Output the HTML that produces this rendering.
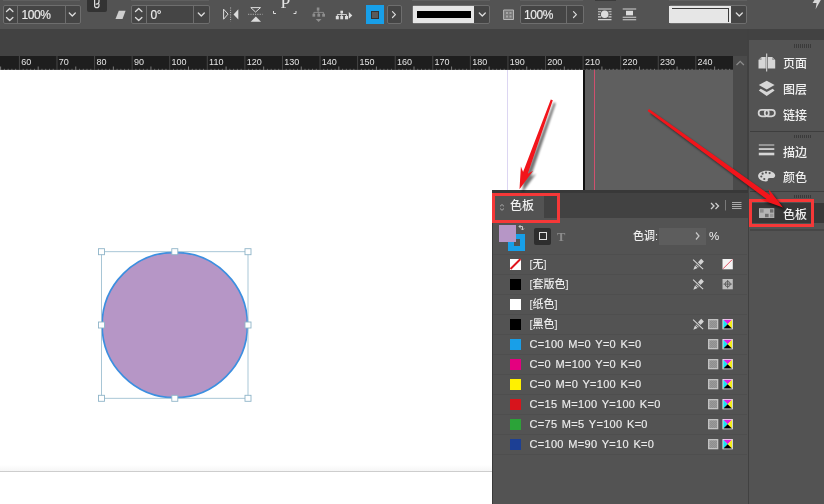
<!DOCTYPE html>
<html lang="zh-CN"><head><meta charset="utf-8"><title>InDesign 色板</title>
<style>
html,body{margin:0;padding:0;background:#535353;}
body{width:824px;height:504px;overflow:hidden;position:relative;font-family:"Liberation Sans","Noto Sans CJK SC",sans-serif;color:#e6e6e6;}
.abs,.abs *{position:absolute;box-sizing:border-box;}
.abs{position:absolute}
#root{left:0;top:0;width:824px;height:504px;overflow:hidden;will-change:transform}
.t{white-space:nowrap;line-height:1}
.inp{border:1px solid #6e6e6e;border-radius:2px;background:#454545}
.inp .dv{top:0;bottom:0;width:1px;background:#6e6e6e}
.lbl{font-size:12px;color:#ececec;letter-spacing:-0.45px;-webkit-text-stroke:0.15px #ececec}
.rl{font-size:9px;color:#e4e4e4;top:58px}
.dk{font-size:12px;color:#f0f0f0;left:783px;font-weight:500}
.sw{left:510px;width:11px;height:11px}
.sn{left:529.5px;font-size:11px;color:#ececec;font-weight:500}
.en{letter-spacing:0.3px;word-spacing:1.2px;-webkit-text-stroke:0.15px #ececec}
.sep{left:493px;width:254px;height:1px;background:#4e4e4e}
svg{position:absolute;overflow:visible}
</style></head><body>
<div id="root" class="abs">

<div style="left:0;top:0;width:824px;height:29px;background:#535353"></div>
<div style="left:0;top:29px;width:824px;height:27px;background:#424242"></div>
<div style="left:3px;top:0;width:77px;height:1px;background:#5f5f5f"></div>
<div style="left:131px;top:0;width:78px;height:1px;background:#5f5f5f"></div>
<div style="left:412px;top:0;width:78px;height:1px;background:#5f5f5f"></div>
<div style="left:520px;top:0;width:63px;height:1px;background:#5f5f5f"></div>
<div style="left:669px;top:0;width:78px;height:1px;background:#5f5f5f"></div>
<div style="left:595px;top:0;width:21px;height:1px;background:#3c3c3c"></div>
<div class="inp" style="left:2.5px;top:5px;width:78.0px;height:19px;"><div class="dv" style="left:13.5px"></div><div class="dv" style="left:61.0px"></div></div>
<div class="t lbl" style="left:21.500px;top:9px">100%</div>
<div class="inp" style="left:131.0px;top:5px;width:79.0px;height:19px;"><div class="dv" style="left:14.3px"></div><div class="dv" style="left:61.3px"></div></div>
<div class="t lbl" style="left:150.500px;top:9px">0°</div>
<div style="left:87px;top:0;width:19.5px;height:11.5px;background:#333;border-radius:0 0 2px 2px"></div>
<div class="inp" style="left:412px;top:5px;width:78px;height:19px;"></div>
<div style="left:412.500px;top:6px;width:61.500px;height:17px;background:#e6e6e6"></div><div style="left:416.500px;top:11px;width:54.500px;height:7px;background:#000"></div>
<div class="inp" style="left:520.0px;top:5px;width:63.5px;height:19px;"><div class="dv" style="left:45.3px"></div></div>
<div class="t lbl" style="left:524px;top:9px">100%</div>
<div class="inp" style="left:669px;top:5px;width:78px;height:19px;"></div>
<div style="left:669px;top:6px;width:62px;height:17px;background:#e6e6e6"></div><div style="left:671.500px;top:7.500px;width:57px;height:14px;border-top:1.500px solid #3a3a3a;border-right:1.500px solid #3a3a3a"></div>
<div style="left:365.500px;top:5px;width:18px;height:19px;background:#189fe8"></div>
<div style="left:370.500px;top:10.500px;width:8px;height:8px;border:1.500px solid #333;background:#5a5a5a"></div>
<div class="inp" style="left:387px;top:5px;width:15px;height:19px;"></div>
<svg style="left:0;top:0" width="824" height="56" viewBox="0 0 824 56" fill="none" stroke="#dcdcdc" stroke-width="1.3" stroke-linecap="round" stroke-linejoin="round">
<path d="M6.5 11.5l3.2-3 3.2 3M6.5 17.5l3.2 3 3.2-3"/>
<path d="M69.300 13l3 3 3-3"/>
<path d="M135.500 11.5l3.2-3 3.2 3M135.5 17.5l3.2 3 3.2-3"/>
<path d="M198.300 13l3 3 3-3"/>
<path d="M479.300 13l3 3 3-3"/>
<path d="M736.300 13l3 3 3-3"/>
<path d="M392.500 11.700l2.900 2.900-2.900 2.900" stroke-width="1.200"/>
<path d="M573.500 11.700l2.900 2.900-2.900 2.900" stroke-width="1.200"/>
<path d="M94.600 -1V5.400a2.200 2.200 0 0 0 4.400 0V4.200M99 -1V1.400c0 1.600-1.200 2.500-2.800 2.700" stroke-width="1.200"/>
<path d="M118.800 10.800h6.800l-3.100 8.300h-7z" fill="#cfcfcf" stroke="none"/>
<path d="M223.600 9.600v9.600l4.200-4.800z" stroke-width="1"/>
<path d="M238.300 9.300v10.200l-4.800-5.100z" fill="#dcdcdc" stroke="none"/>
<path d="M230.600 7.500v14" stroke-dasharray="1 1.300" stroke-width="1" stroke-linecap="butt" stroke="#bdbdbd"/>
<path d="M251.200 7.600h9.300l-4.650 4.200z" stroke-width="1"/>
<path d="M250.700 21.700h10.300l-5.150-5.200z" fill="#dcdcdc" stroke="none"/>
<path d="M248.200 14.300h14.300" stroke-dasharray="1 1.300" stroke-width="1" stroke-linecap="butt" stroke="#bdbdbd"/>
<path d="M273.500 11v2.500h2.500M296 11v2.500h-2.500" stroke-width="1" stroke-linecap="butt" stroke-linejoin="miter"/>
<g fill="#8e8e8e" stroke="#8e8e8e" stroke-width="0.900" stroke-linecap="butt" stroke-linejoin="miter">
<rect x="316.800" y="7.500" width="2.600" height="3.200" stroke="none"/><path d="M318.100 10.700v1.700M313.850 14v-1.600h9.700v1.600M318.750 12.400v1.600" fill="none"/>
<rect x="312.500" y="13.800" width="2.700" height="2.900" stroke="none"/><rect x="317.400" y="13.800" width="2.700" height="2.900" stroke="none"/><rect x="322.200" y="13.800" width="2.800" height="2.900" stroke="none"/>
<path d="M315.700 19h5.800l-2.900 3.100z" stroke="none"/>
</g>
<g fill="#dedede" stroke="#dedede" stroke-width="0.900" stroke-linecap="butt" stroke-linejoin="miter">
<rect x="340.400" y="10.700" width="2.600" height="2.700" stroke="none"/><path d="M341.700 13.400v1.100M337.300 16.200v-1.700h9.200v1.700M341.700 14.500v1.700" fill="none"/>
<rect x="335.800" y="16" width="3" height="3.300" stroke="none"/><rect x="340.300" y="16" width="2.800" height="3.300" stroke="none"/><rect x="345" y="16" width="3" height="3.300" stroke="none"/>
<path d="M348.800 12.100v6.700l3.500-3.350z" stroke="none"/>
</g>
<g stroke="#b8b8b8" stroke-width="1"><rect x="504" y="10" width="9.500" height="9.500" fill="#7a7a7a"/>
<path d="M506 12h2v2h-2zM509.500 12h2v2h-2zM506 15.500h2v2h-2zM509.500 15.500h2v2h-2z" fill="#a5a5a5" stroke="none"/></g>
<g stroke="#d2d2d2" stroke-width="1.100" stroke-linecap="butt">
<path d="M598 9h13.500M598 19.600h13.500M598 11.700h3M608.500 11.700h3M598 14.300h2M609.500 14.300h2M598 16.900h3M608.500 16.900h3"/>
<circle cx="604.700" cy="14.300" r="3.800" fill="#dcdcdc" stroke="none"/>
<path d="M622.700 9h13.500M622.700 17.300h13.500M622.700 19.800h13.500"/>
<rect x="626" y="10.800" width="7" height="4.500" fill="#dcdcdc" stroke="none"/>
</g>
<path d="M814.500 0h6.300l-5.200 9.200 1-6.200h-4z" fill="#d8d8d8" stroke="none"/>
</svg>
<div class="t" style="left:280.500px;top:-6.500px;font-family:'Liberation Serif',serif;font-size:17.500px;color:#e4e4e4">P</div>
<div style="left:0;top:56px;width:733px;height:14.300px;background:#1e1e1e"></div>
<svg style="left:0;top:56px" width="733" height="15" viewBox="0 0 733 15"><g fill="#b4b4b4"><rect x="0.11" y="10.500" width="1" height="3.800" fill="#7a7a7a"/><rect x="3.87" y="12.800" width="1" height="1.500" fill="#6a6a6a"/><rect x="7.63" y="12.800" width="1" height="1.500" fill="#6a6a6a"/><rect x="11.38" y="12.800" width="1" height="1.500" fill="#6a6a6a"/><rect x="15.14" y="12.800" width="1" height="1.500" fill="#6a6a6a"/><rect x="18.90" y="0" width="1" height="14.300" fill="#474747"/><rect x="22.66" y="12.800" width="1" height="1.500" fill="#6a6a6a"/><rect x="26.42" y="12.800" width="1" height="1.500" fill="#6a6a6a"/><rect x="30.17" y="12.800" width="1" height="1.500" fill="#6a6a6a"/><rect x="33.93" y="12.800" width="1" height="1.500" fill="#6a6a6a"/><rect x="37.69" y="10.500" width="1" height="3.800" fill="#7a7a7a"/><rect x="41.45" y="12.800" width="1" height="1.500" fill="#6a6a6a"/><rect x="45.21" y="12.800" width="1" height="1.500" fill="#6a6a6a"/><rect x="48.96" y="12.800" width="1" height="1.500" fill="#6a6a6a"/><rect x="52.72" y="12.800" width="1" height="1.500" fill="#6a6a6a"/><rect x="56.48" y="0" width="1" height="14.300" fill="#474747"/><rect x="60.24" y="12.800" width="1" height="1.500" fill="#6a6a6a"/><rect x="64.00" y="12.800" width="1" height="1.500" fill="#6a6a6a"/><rect x="67.75" y="12.800" width="1" height="1.500" fill="#6a6a6a"/><rect x="71.51" y="12.800" width="1" height="1.500" fill="#6a6a6a"/><rect x="75.27" y="10.500" width="1" height="3.800" fill="#7a7a7a"/><rect x="79.03" y="12.800" width="1" height="1.500" fill="#6a6a6a"/><rect x="82.79" y="12.800" width="1" height="1.500" fill="#6a6a6a"/><rect x="86.54" y="12.800" width="1" height="1.500" fill="#6a6a6a"/><rect x="90.30" y="12.800" width="1" height="1.500" fill="#6a6a6a"/><rect x="94.06" y="0" width="1" height="14.300" fill="#474747"/><rect x="97.82" y="12.800" width="1" height="1.500" fill="#6a6a6a"/><rect x="101.58" y="12.800" width="1" height="1.500" fill="#6a6a6a"/><rect x="105.33" y="12.800" width="1" height="1.500" fill="#6a6a6a"/><rect x="109.09" y="12.800" width="1" height="1.500" fill="#6a6a6a"/><rect x="112.85" y="10.500" width="1" height="3.800" fill="#7a7a7a"/><rect x="116.61" y="12.800" width="1" height="1.500" fill="#6a6a6a"/><rect x="120.37" y="12.800" width="1" height="1.500" fill="#6a6a6a"/><rect x="124.12" y="12.800" width="1" height="1.500" fill="#6a6a6a"/><rect x="127.88" y="12.800" width="1" height="1.500" fill="#6a6a6a"/><rect x="131.64" y="0" width="1" height="14.300" fill="#474747"/><rect x="135.40" y="12.800" width="1" height="1.500" fill="#6a6a6a"/><rect x="139.16" y="12.800" width="1" height="1.500" fill="#6a6a6a"/><rect x="142.91" y="12.800" width="1" height="1.500" fill="#6a6a6a"/><rect x="146.67" y="12.800" width="1" height="1.500" fill="#6a6a6a"/><rect x="150.43" y="10.500" width="1" height="3.800" fill="#7a7a7a"/><rect x="154.19" y="12.800" width="1" height="1.500" fill="#6a6a6a"/><rect x="157.95" y="12.800" width="1" height="1.500" fill="#6a6a6a"/><rect x="161.70" y="12.800" width="1" height="1.500" fill="#6a6a6a"/><rect x="165.46" y="12.800" width="1" height="1.500" fill="#6a6a6a"/><rect x="169.22" y="0" width="1" height="14.300" fill="#474747"/><rect x="172.98" y="12.800" width="1" height="1.500" fill="#6a6a6a"/><rect x="176.74" y="12.800" width="1" height="1.500" fill="#6a6a6a"/><rect x="180.49" y="12.800" width="1" height="1.500" fill="#6a6a6a"/><rect x="184.25" y="12.800" width="1" height="1.500" fill="#6a6a6a"/><rect x="188.01" y="10.500" width="1" height="3.800" fill="#7a7a7a"/><rect x="191.77" y="12.800" width="1" height="1.500" fill="#6a6a6a"/><rect x="195.53" y="12.800" width="1" height="1.500" fill="#6a6a6a"/><rect x="199.28" y="12.800" width="1" height="1.500" fill="#6a6a6a"/><rect x="203.04" y="12.800" width="1" height="1.500" fill="#6a6a6a"/><rect x="206.80" y="0" width="1" height="14.300" fill="#474747"/><rect x="210.56" y="12.800" width="1" height="1.500" fill="#6a6a6a"/><rect x="214.32" y="12.800" width="1" height="1.500" fill="#6a6a6a"/><rect x="218.07" y="12.800" width="1" height="1.500" fill="#6a6a6a"/><rect x="221.83" y="12.800" width="1" height="1.500" fill="#6a6a6a"/><rect x="225.59" y="10.500" width="1" height="3.800" fill="#7a7a7a"/><rect x="229.35" y="12.800" width="1" height="1.500" fill="#6a6a6a"/><rect x="233.11" y="12.800" width="1" height="1.500" fill="#6a6a6a"/><rect x="236.86" y="12.800" width="1" height="1.500" fill="#6a6a6a"/><rect x="240.62" y="12.800" width="1" height="1.500" fill="#6a6a6a"/><rect x="244.38" y="0" width="1" height="14.300" fill="#474747"/><rect x="248.14" y="12.800" width="1" height="1.500" fill="#6a6a6a"/><rect x="251.90" y="12.800" width="1" height="1.500" fill="#6a6a6a"/><rect x="255.65" y="12.800" width="1" height="1.500" fill="#6a6a6a"/><rect x="259.41" y="12.800" width="1" height="1.500" fill="#6a6a6a"/><rect x="263.17" y="10.500" width="1" height="3.800" fill="#7a7a7a"/><rect x="266.93" y="12.800" width="1" height="1.500" fill="#6a6a6a"/><rect x="270.69" y="12.800" width="1" height="1.500" fill="#6a6a6a"/><rect x="274.44" y="12.800" width="1" height="1.500" fill="#6a6a6a"/><rect x="278.20" y="12.800" width="1" height="1.500" fill="#6a6a6a"/><rect x="281.96" y="0" width="1" height="14.300" fill="#474747"/><rect x="285.72" y="12.800" width="1" height="1.500" fill="#6a6a6a"/><rect x="289.48" y="12.800" width="1" height="1.500" fill="#6a6a6a"/><rect x="293.23" y="12.800" width="1" height="1.500" fill="#6a6a6a"/><rect x="296.99" y="12.800" width="1" height="1.500" fill="#6a6a6a"/><rect x="300.75" y="10.500" width="1" height="3.800" fill="#7a7a7a"/><rect x="304.51" y="12.800" width="1" height="1.500" fill="#6a6a6a"/><rect x="308.27" y="12.800" width="1" height="1.500" fill="#6a6a6a"/><rect x="312.02" y="12.800" width="1" height="1.500" fill="#6a6a6a"/><rect x="315.78" y="12.800" width="1" height="1.500" fill="#6a6a6a"/><rect x="319.54" y="0" width="1" height="14.300" fill="#474747"/><rect x="323.30" y="12.800" width="1" height="1.500" fill="#6a6a6a"/><rect x="327.06" y="12.800" width="1" height="1.500" fill="#6a6a6a"/><rect x="330.81" y="12.800" width="1" height="1.500" fill="#6a6a6a"/><rect x="334.57" y="12.800" width="1" height="1.500" fill="#6a6a6a"/><rect x="338.33" y="10.500" width="1" height="3.800" fill="#7a7a7a"/><rect x="342.09" y="12.800" width="1" height="1.500" fill="#6a6a6a"/><rect x="345.85" y="12.800" width="1" height="1.500" fill="#6a6a6a"/><rect x="349.60" y="12.800" width="1" height="1.500" fill="#6a6a6a"/><rect x="353.36" y="12.800" width="1" height="1.500" fill="#6a6a6a"/><rect x="357.12" y="0" width="1" height="14.300" fill="#474747"/><rect x="360.88" y="12.800" width="1" height="1.500" fill="#6a6a6a"/><rect x="364.64" y="12.800" width="1" height="1.500" fill="#6a6a6a"/><rect x="368.39" y="12.800" width="1" height="1.500" fill="#6a6a6a"/><rect x="372.15" y="12.800" width="1" height="1.500" fill="#6a6a6a"/><rect x="375.91" y="10.500" width="1" height="3.800" fill="#7a7a7a"/><rect x="379.67" y="12.800" width="1" height="1.500" fill="#6a6a6a"/><rect x="383.43" y="12.800" width="1" height="1.500" fill="#6a6a6a"/><rect x="387.18" y="12.800" width="1" height="1.500" fill="#6a6a6a"/><rect x="390.94" y="12.800" width="1" height="1.500" fill="#6a6a6a"/><rect x="394.70" y="0" width="1" height="14.300" fill="#474747"/><rect x="398.46" y="12.800" width="1" height="1.500" fill="#6a6a6a"/><rect x="402.22" y="12.800" width="1" height="1.500" fill="#6a6a6a"/><rect x="405.97" y="12.800" width="1" height="1.500" fill="#6a6a6a"/><rect x="409.73" y="12.800" width="1" height="1.500" fill="#6a6a6a"/><rect x="413.49" y="10.500" width="1" height="3.800" fill="#7a7a7a"/><rect x="417.25" y="12.800" width="1" height="1.500" fill="#6a6a6a"/><rect x="421.01" y="12.800" width="1" height="1.500" fill="#6a6a6a"/><rect x="424.76" y="12.800" width="1" height="1.500" fill="#6a6a6a"/><rect x="428.52" y="12.800" width="1" height="1.500" fill="#6a6a6a"/><rect x="432.28" y="0" width="1" height="14.300" fill="#474747"/><rect x="436.04" y="12.800" width="1" height="1.500" fill="#6a6a6a"/><rect x="439.80" y="12.800" width="1" height="1.500" fill="#6a6a6a"/><rect x="443.55" y="12.800" width="1" height="1.500" fill="#6a6a6a"/><rect x="447.31" y="12.800" width="1" height="1.500" fill="#6a6a6a"/><rect x="451.07" y="10.500" width="1" height="3.800" fill="#7a7a7a"/><rect x="454.83" y="12.800" width="1" height="1.500" fill="#6a6a6a"/><rect x="458.59" y="12.800" width="1" height="1.500" fill="#6a6a6a"/><rect x="462.34" y="12.800" width="1" height="1.500" fill="#6a6a6a"/><rect x="466.10" y="12.800" width="1" height="1.500" fill="#6a6a6a"/><rect x="469.86" y="0" width="1" height="14.300" fill="#474747"/><rect x="473.62" y="12.800" width="1" height="1.500" fill="#6a6a6a"/><rect x="477.38" y="12.800" width="1" height="1.500" fill="#6a6a6a"/><rect x="481.13" y="12.800" width="1" height="1.500" fill="#6a6a6a"/><rect x="484.89" y="12.800" width="1" height="1.500" fill="#6a6a6a"/><rect x="488.65" y="10.500" width="1" height="3.800" fill="#7a7a7a"/><rect x="492.41" y="12.800" width="1" height="1.500" fill="#6a6a6a"/><rect x="496.17" y="12.800" width="1" height="1.500" fill="#6a6a6a"/><rect x="499.92" y="12.800" width="1" height="1.500" fill="#6a6a6a"/><rect x="503.68" y="12.800" width="1" height="1.500" fill="#6a6a6a"/><rect x="507.44" y="0" width="1" height="14.300" fill="#474747"/><rect x="511.20" y="12.800" width="1" height="1.500" fill="#6a6a6a"/><rect x="514.96" y="12.800" width="1" height="1.500" fill="#6a6a6a"/><rect x="518.71" y="12.800" width="1" height="1.500" fill="#6a6a6a"/><rect x="522.47" y="12.800" width="1" height="1.500" fill="#6a6a6a"/><rect x="526.23" y="10.500" width="1" height="3.800" fill="#7a7a7a"/><rect x="529.99" y="12.800" width="1" height="1.500" fill="#6a6a6a"/><rect x="533.75" y="12.800" width="1" height="1.500" fill="#6a6a6a"/><rect x="537.50" y="12.800" width="1" height="1.500" fill="#6a6a6a"/><rect x="541.26" y="12.800" width="1" height="1.500" fill="#6a6a6a"/><rect x="545.02" y="0" width="1" height="14.300" fill="#474747"/><rect x="548.78" y="12.800" width="1" height="1.500" fill="#6a6a6a"/><rect x="552.54" y="12.800" width="1" height="1.500" fill="#6a6a6a"/><rect x="556.29" y="12.800" width="1" height="1.500" fill="#6a6a6a"/><rect x="560.05" y="12.800" width="1" height="1.500" fill="#6a6a6a"/><rect x="563.81" y="10.500" width="1" height="3.800" fill="#7a7a7a"/><rect x="567.57" y="12.800" width="1" height="1.500" fill="#6a6a6a"/><rect x="571.33" y="12.800" width="1" height="1.500" fill="#6a6a6a"/><rect x="575.08" y="12.800" width="1" height="1.500" fill="#6a6a6a"/><rect x="578.84" y="12.800" width="1" height="1.500" fill="#6a6a6a"/><rect x="582.60" y="0" width="1" height="14.300" fill="#474747"/><rect x="586.36" y="12.800" width="1" height="1.500" fill="#6a6a6a"/><rect x="590.12" y="12.800" width="1" height="1.500" fill="#6a6a6a"/><rect x="593.87" y="12.800" width="1" height="1.500" fill="#6a6a6a"/><rect x="597.63" y="12.800" width="1" height="1.500" fill="#6a6a6a"/><rect x="601.39" y="10.500" width="1" height="3.800" fill="#7a7a7a"/><rect x="605.15" y="12.800" width="1" height="1.500" fill="#6a6a6a"/><rect x="608.91" y="12.800" width="1" height="1.500" fill="#6a6a6a"/><rect x="612.66" y="12.800" width="1" height="1.500" fill="#6a6a6a"/><rect x="616.42" y="12.800" width="1" height="1.500" fill="#6a6a6a"/><rect x="620.18" y="0" width="1" height="14.300" fill="#474747"/><rect x="623.94" y="12.800" width="1" height="1.500" fill="#6a6a6a"/><rect x="627.70" y="12.800" width="1" height="1.500" fill="#6a6a6a"/><rect x="631.45" y="12.800" width="1" height="1.500" fill="#6a6a6a"/><rect x="635.21" y="12.800" width="1" height="1.500" fill="#6a6a6a"/><rect x="638.97" y="10.500" width="1" height="3.800" fill="#7a7a7a"/><rect x="642.73" y="12.800" width="1" height="1.500" fill="#6a6a6a"/><rect x="646.49" y="12.800" width="1" height="1.500" fill="#6a6a6a"/><rect x="650.24" y="12.800" width="1" height="1.500" fill="#6a6a6a"/><rect x="654.00" y="12.800" width="1" height="1.500" fill="#6a6a6a"/><rect x="657.76" y="0" width="1" height="14.300" fill="#474747"/><rect x="661.52" y="12.800" width="1" height="1.500" fill="#6a6a6a"/><rect x="665.28" y="12.800" width="1" height="1.500" fill="#6a6a6a"/><rect x="669.03" y="12.800" width="1" height="1.500" fill="#6a6a6a"/><rect x="672.79" y="12.800" width="1" height="1.500" fill="#6a6a6a"/><rect x="676.55" y="10.500" width="1" height="3.800" fill="#7a7a7a"/><rect x="680.31" y="12.800" width="1" height="1.500" fill="#6a6a6a"/><rect x="684.07" y="12.800" width="1" height="1.500" fill="#6a6a6a"/><rect x="687.82" y="12.800" width="1" height="1.500" fill="#6a6a6a"/><rect x="691.58" y="12.800" width="1" height="1.500" fill="#6a6a6a"/><rect x="695.34" y="0" width="1" height="14.300" fill="#474747"/><rect x="699.10" y="12.800" width="1" height="1.500" fill="#6a6a6a"/><rect x="702.86" y="12.800" width="1" height="1.500" fill="#6a6a6a"/><rect x="706.61" y="12.800" width="1" height="1.500" fill="#6a6a6a"/><rect x="710.37" y="12.800" width="1" height="1.500" fill="#6a6a6a"/><rect x="714.13" y="10.500" width="1" height="3.800" fill="#7a7a7a"/><rect x="717.89" y="12.800" width="1" height="1.500" fill="#6a6a6a"/><rect x="721.65" y="12.800" width="1" height="1.500" fill="#6a6a6a"/><rect x="725.40" y="12.800" width="1" height="1.500" fill="#6a6a6a"/><rect x="729.16" y="12.800" width="1" height="1.500" fill="#6a6a6a"/><rect x="0" y="13.800" width="733" height="0.600" fill="#8a8a8a"/></g></svg>
<div class="t rl" style="left:21.2px">60</div>
<div class="t rl" style="left:58.8px">70</div>
<div class="t rl" style="left:96.4px">80</div>
<div class="t rl" style="left:133.9px">90</div>
<div class="t rl" style="left:171.5px">100</div>
<div class="t rl" style="left:209.1px">110</div>
<div class="t rl" style="left:246.7px">120</div>
<div class="t rl" style="left:284.3px">130</div>
<div class="t rl" style="left:321.8px">140</div>
<div class="t rl" style="left:359.4px">150</div>
<div class="t rl" style="left:397.0px">160</div>
<div class="t rl" style="left:434.6px">170</div>
<div class="t rl" style="left:472.2px">180</div>
<div class="t rl" style="left:509.7px">190</div>
<div class="t rl" style="left:547.3px">200</div>
<div class="t rl" style="left:584.9px">210</div>
<div class="t rl" style="left:622.5px">220</div>
<div class="t rl" style="left:660.1px">230</div>
<div class="t rl" style="left:697.6px">240</div>
<div style="left:0;top:70.300px;width:583px;height:434px;background:#fff"></div>
<div style="left:582.700px;top:70.300px;width:2px;height:434px;background:#111"></div>
<div style="left:584.500px;top:70.300px;width:148.500px;height:434px;background:#5f5f5f"></div>
<div style="left:594px;top:70.300px;width:1px;height:434px;background:#d0506e"></div>
<div style="left:507px;top:70.300px;width:1px;height:434px;background:#dcd6f2"></div>
<div style="left:0;top:465px;width:492px;height:6px;background:linear-gradient(#fff,#f6f6f6)"></div>
<div style="left:0;top:471px;width:492px;height:1px;background:#cdcdcd"></div>
<div style="left:733px;top:56px;width:14.500px;height:448px;background:#4a4a4a"></div>
<svg style="left:733px;top:56px" width="15" height="15" viewBox="0 0 15 15" fill="none" stroke="#8c8c8c" stroke-width="1.300"><path d="M3.500 9l3.700-3.700 3.700 3.700"/></svg>
<div style="left:747px;top:29px;width:2px;height:475px;background:#414141"></div>
<svg style="left:0;top:0" width="824" height="504" viewBox="0 0 824 504">
<circle cx="174.800" cy="325" r="72.700" fill="#b696c6" stroke="#3c8fe0" stroke-width="1.700"/>
<rect x="101.500" y="251.700" width="146.500" height="146.600" fill="none" stroke="#9fc0d2" stroke-width="0.900"/>
<g fill="#fff" stroke="#8fb4c8" stroke-width="0.900">
<rect x="98.5" y="248.7" width="6" height="6"/>
<rect x="171.8" y="248.7" width="6" height="6"/>
<rect x="245.0" y="248.7" width="6" height="6"/>
<rect x="98.5" y="322.0" width="6" height="6"/>
<rect x="245.0" y="322.0" width="6" height="6"/>
<rect x="98.5" y="395.3" width="6" height="6"/>
<rect x="171.8" y="395.3" width="6" height="6"/>
<rect x="245.0" y="395.3" width="6" height="6"/>
</g></svg>
<div style="left:749px;top:40.400px;width:75px;height:464px;background:#535353"></div>
<div style="left:749.500px;top:130.500px;width:75px;height:1.500px;background:#3e3e3e"></div>
<div style="left:749.500px;top:190.500px;width:75px;height:1.500px;background:#3e3e3e"></div>
<div style="left:752px;top:203px;width:72px;height:19.500px;background:#383838"></div>
<div style="left:749.500px;top:229px;width:75px;height:1.500px;background:#464646"></div>
<div style="left:793.500px;top:44.3px;width:17px;height:3.300px;background:repeating-linear-gradient(90deg,#3a3a3a 0 1px,transparent 1px 2px)"></div>
<div style="left:793.500px;top:134.5px;width:17px;height:3.300px;background:repeating-linear-gradient(90deg,#3a3a3a 0 1px,transparent 1px 2px)"></div>
<div style="left:793.500px;top:195.0px;width:17px;height:3.300px;background:repeating-linear-gradient(90deg,#3a3a3a 0 1px,transparent 1px 2px)"></div>
<div class="t dk" style="top:57.5px">页面</div>
<div class="t dk" style="top:83.5px">图层</div>
<div class="t dk" style="top:109.5px">链接</div>
<div class="t dk" style="top:146.5px">描边</div>
<div class="t dk" style="top:171.5px">颜色</div>
<div class="t dk" style="top:208.5px">色板</div>
<svg style="left:0;top:0" width="824" height="504" viewBox="0 0 824 504" fill="#d6d6d6" stroke="none">
<path d="M758.500 60l3-3h4.200v11.500h-7.200zM775.200 60l-3-3h-4.400v11.500h7.400z"/>
<path d="M758.500 60h3v-3zM775.200 60h-3v-3z" fill="#9a9a9a"/>
<rect x="766.200" y="53.500" width="1" height="18" fill="#e2e2e2"/>
<path d="M766.700 80.800l7.900 4.300-7.900 4.300-7.900-4.300z"/>
<path d="M760.700 88.700l6 3.300 6-3.300 1.900 1.700-7.900 5.500-7.900-5.500z"/>
<g fill="none" stroke="#d6d6d6" stroke-width="1.700"><rect x="758.600" y="109.900" width="10.200" height="6.400" rx="3.200"/><rect x="764.700" y="109.900" width="10.200" height="6.400" rx="3.200"/></g>
<rect x="758.800" y="144.500" width="15.500" height="1"/><rect x="758.800" y="148.200" width="15.500" height="1.700"/><rect x="758.800" y="152.700" width="15.500" height="2.600"/>
<g transform="translate(0 0.700)"><path d="M766.500 170c-4.700 0-8.400 2.400-8.400 5.400 0 3 3.500 5.300 7.800 5.300 1.500 0 2.100-.6 1.900-1.400-.3-1.100.5-1.900 1.900-1.900h2.200c1.900 0 3.300-1 3.300-2.600 0-2.700-3.900-4.800-8.700-4.800z"/>
<g fill="#535353"><circle cx="761.300" cy="175.800" r="1.100"/><circle cx="762.600" cy="173" r="1.100"/><circle cx="766" cy="171.900" r="1.100"/><circle cx="769.600" cy="172.400" r="1.100"/><circle cx="764.300" cy="178.300" r="1.100"/></g></g>
<rect x="759" y="208.200" width="15.300" height="9.800" fill="#b4b4b4"/>
<g fill="#6e6e6e"><rect x="760" y="209.200" width="3.600" height="3.400" fill="#8c8c8c"/><rect x="770" y="209.200" width="3.400" height="3.400"/><rect x="765" y="213.800" width="3.600" height="3.400"/><rect x="770" y="213.800" width="3.400" height="3.400" fill="#989898"/></g>
</svg>
<div style="left:492px;top:190px;width:256px;height:314px;background:#535353"></div>
<div style="left:492px;top:190px;width:256px;height:28px;background:#424242"></div>
<div style="left:492px;top:190px;width:256px;height:3px;background:#383838"></div>
<div style="left:492px;top:190px;width:1px;height:314px;background:#3a3a3a"></div>
<div style="left:493px;top:193px;width:51px;height:25px;background:#535353"></div>
<div class="t" style="left:510px;top:200px;font-size:12px;font-weight:500;color:#f0f0f0">色板</div>
<svg style="left:0;top:0" width="824" height="504" viewBox="0 0 824 504" fill="none" stroke="#cfcfcf" stroke-width="1"><path d="M500 206.300l2-1.800 2 1.800M500 208.500l2 1.800 2-1.800" stroke="#a8a8a8"/><path d="M711 203l3 3-3 3M715.500 203l3 3-3 3" stroke-width="1.300"/><path d="M725.500 200v10.500" stroke="#7a7a7a"/><path d="M732 202.500h9.500M732 204.500h9.500M732 206.500h9.500M732 208.500h9.500" stroke="#aaaaaa" stroke-width="1"/></svg>
<div style="left:508px;top:233.500px;width:17px;height:17px;background:#189fe8"></div>
<div style="left:513.500px;top:239px;width:6.500px;height:6.500px;background:#535353"></div>
<div style="left:499px;top:225px;width:17px;height:16.500px;background:#b696c6"></div>
<svg style="left:0;top:0" width="824" height="504" viewBox="0 0 824 504" fill="none" stroke="#c8c8c8" stroke-width="1"><path d="M519 226.500h3.500v3.500M520.500 225l-1.500 1.500 1.500 1.500M521 228.500l1.500 1.500 1.500-1.500"/></svg>
<div style="left:534px;top:228px;width:17px;height:16.500px;background:#2e2e2e;border-radius:2px"></div>
<div style="left:538.500px;top:232px;width:8px;height:8px;border:1.300px solid #e0e0e0"></div>
<div class="t" style="left:557px;top:230.500px;font-family:'Liberation Serif',serif;font-weight:bold;font-size:12.500px;color:#8c8c8c">T</div>
<div class="t" style="left:633px;top:231px;font-size:11px;font-weight:500;color:#f0f0f0">色调:</div>
<div style="left:658.500px;top:227.500px;width:47.500px;height:17.500px;background:#5d5d5d"></div>
<svg style="left:0;top:0" width="824" height="504" viewBox="0 0 824 504" fill="none" stroke="#c8c8c8" stroke-width="1.200"><path d="M696 232.500l3 3.500-3 3.500"/></svg>
<div class="t" style="left:709px;top:231px;font-size:11.500px;color:#f0f0f0">%</div>
<div class="sep" style="top:254px"></div>
<div class="sw" style="top:258.5px;background:#fff"></div>
<div class="t sn" style="top:259.0px">[无]</div>
<div class="sep" style="top:274.0px"></div>
<div class="sw" style="top:278.5px;background:#000"></div>
<div class="t sn" style="top:279.0px">[套版色]</div>
<div class="sep" style="top:294.0px"></div>
<div class="sw" style="top:298.5px;background:#fff"></div>
<div class="t sn" style="top:299.0px">[纸色]</div>
<div class="sep" style="top:314.0px"></div>
<div class="sw" style="top:318.5px;background:#000"></div>
<div class="t sn" style="top:319.0px">[黑色]</div>
<div class="sep" style="top:334.0px"></div>
<div class="sw" style="top:338.5px;background:#189fe8"></div>
<div class="t sn en" style="top:339.0px">C=100 M=0 Y=0 K=0</div>
<div class="sep" style="top:354.0px"></div>
<div class="sw" style="top:358.5px;background:#e4007f"></div>
<div class="t sn en" style="top:359.0px">C=0 M=100 Y=0 K=0</div>
<div class="sep" style="top:374.0px"></div>
<div class="sw" style="top:378.5px;background:#fff100"></div>
<div class="t sn en" style="top:379.0px">C=0 M=0 Y=100 K=0</div>
<div class="sep" style="top:394.0px"></div>
<div class="sw" style="top:398.5px;background:#d7141c"></div>
<div class="t sn en" style="top:399.0px">C=15 M=100 Y=100 K=0</div>
<div class="sep" style="top:414.0px"></div>
<div class="sw" style="top:418.5px;background:#2ba338"></div>
<div class="t sn en" style="top:419.0px">C=75 M=5 Y=100 K=0</div>
<div class="sep" style="top:434.0px"></div>
<div class="sw" style="top:438.5px;background:#1c3f94"></div>
<div class="t sn en" style="top:439.0px">C=100 M=90 Y=10 K=0</div>
<div class="sep" style="top:454.0px"></div>
<svg style="left:0;top:0" width="824" height="504" viewBox="0 0 824 504"><defs><pattern id="dots" x="709.300" y="0.300" width="2" height="2" patternUnits="userSpaceOnUse"><rect width="2" height="2" fill="#bcbcbc"/><rect width="1" height="1" fill="#6c6c6c"/><rect x="1" y="1" width="1" height="1" fill="#6c6c6c"/></pattern></defs><path d="M510.500 269.0L520.500 259.0" stroke="#e0141c" stroke-width="2"/><g transform="translate(692.500 259.0)" stroke="#d4d4d4" stroke-width="1.200" fill="#d4d4d4"><path d="M8.700 -0.200l2.700 2.600-5.700 6.200-2.700-2.600z" stroke="none"/><path d="M2.500 6.600l2.600 2.500-4.300 1.700z" stroke="none"/><path d="M0.600 0.600l10 9.600" fill="none" stroke="#535353" stroke-width="2.800"/><path d="M0.600 0.600l10 9.600" fill="none" stroke-width="1.100"/></g><rect x="722.500" y="259.0" width="10.300" height="10.300" fill="#f4f4f4"/><path d="M723 268.8L732.300 259.5" stroke="#e05060" stroke-width="1"/><g transform="translate(692.500 279.0)" stroke="#d4d4d4" stroke-width="1.200" fill="#d4d4d4"><path d="M8.700 -0.200l2.700 2.600-5.700 6.200-2.700-2.600z" stroke="none"/><path d="M2.500 6.600l2.600 2.500-4.300 1.700z" stroke="none"/><path d="M0.600 0.600l10 9.600" fill="none" stroke="#535353" stroke-width="2.800"/><path d="M0.600 0.600l10 9.600" fill="none" stroke-width="1.100"/></g><rect x="722.500" y="279.0" width="10.300" height="10.300" fill="#bebebe"/><g fill="none" stroke="#555" stroke-width="0.900"><circle cx="727.650" cy="284.1" r="2.600"/><path d="M727.650 280.0v8.300M723.500 284.1h8.300"/></g><g transform="translate(692.500 319.0)" stroke="#d4d4d4" stroke-width="1.200" fill="#d4d4d4"><path d="M8.700 -0.200l2.700 2.600-5.700 6.200-2.700-2.600z" stroke="none"/><path d="M2.500 6.600l2.600 2.500-4.300 1.700z" stroke="none"/><path d="M0.600 0.600l10 9.600" fill="none" stroke="#535353" stroke-width="2.800"/><path d="M0.600 0.600l10 9.600" fill="none" stroke-width="1.100"/></g><rect x="708" y="319.0" width="10.300" height="10.300" fill="#c2c2c2"/><rect x="709.300" y="320.3" width="7.700" height="7.700" fill="url(#dots)"/><rect x="722.5" y="319.0" width="10.300" height="10.300" fill="#f0f0f0"/><path d="M723.30 319.80h8.70l-4.35 4.35z" fill="#e818e0"/><path d="M723.30 319.80v8.70l4.35 -4.35z" fill="#18e0f0"/><path d="M732.00 319.80v8.70l-4.35 -4.35z" fill="#f8f018"/><path d="M723.30 328.50h8.70l-4.35 -4.35z" fill="#000"/><rect x="708" y="339.0" width="10.300" height="10.300" fill="#c2c2c2"/><rect x="709.300" y="340.3" width="7.700" height="7.700" fill="url(#dots)"/><rect x="722.5" y="339.0" width="10.300" height="10.300" fill="#f0f0f0"/><path d="M723.30 339.80h8.70l-4.35 4.35z" fill="#e818e0"/><path d="M723.30 339.80v8.70l4.35 -4.35z" fill="#18e0f0"/><path d="M732.00 339.80v8.70l-4.35 -4.35z" fill="#f8f018"/><path d="M723.30 348.50h8.70l-4.35 -4.35z" fill="#000"/><rect x="708" y="359.0" width="10.300" height="10.300" fill="#c2c2c2"/><rect x="709.300" y="360.3" width="7.700" height="7.700" fill="url(#dots)"/><rect x="722.5" y="359.0" width="10.300" height="10.300" fill="#f0f0f0"/><path d="M723.30 359.80h8.70l-4.35 4.35z" fill="#e818e0"/><path d="M723.30 359.80v8.70l4.35 -4.35z" fill="#18e0f0"/><path d="M732.00 359.80v8.70l-4.35 -4.35z" fill="#f8f018"/><path d="M723.30 368.50h8.70l-4.35 -4.35z" fill="#000"/><rect x="708" y="379.0" width="10.300" height="10.300" fill="#c2c2c2"/><rect x="709.300" y="380.3" width="7.700" height="7.700" fill="url(#dots)"/><rect x="722.5" y="379.0" width="10.300" height="10.300" fill="#f0f0f0"/><path d="M723.30 379.80h8.70l-4.35 4.35z" fill="#e818e0"/><path d="M723.30 379.80v8.70l4.35 -4.35z" fill="#18e0f0"/><path d="M732.00 379.80v8.70l-4.35 -4.35z" fill="#f8f018"/><path d="M723.30 388.50h8.70l-4.35 -4.35z" fill="#000"/><rect x="708" y="399.0" width="10.300" height="10.300" fill="#c2c2c2"/><rect x="709.300" y="400.3" width="7.700" height="7.700" fill="url(#dots)"/><rect x="722.5" y="399.0" width="10.300" height="10.300" fill="#f0f0f0"/><path d="M723.30 399.80h8.70l-4.35 4.35z" fill="#e818e0"/><path d="M723.30 399.80v8.70l4.35 -4.35z" fill="#18e0f0"/><path d="M732.00 399.80v8.70l-4.35 -4.35z" fill="#f8f018"/><path d="M723.30 408.50h8.70l-4.35 -4.35z" fill="#000"/><rect x="708" y="419.0" width="10.300" height="10.300" fill="#c2c2c2"/><rect x="709.300" y="420.3" width="7.700" height="7.700" fill="url(#dots)"/><rect x="722.5" y="419.0" width="10.300" height="10.300" fill="#f0f0f0"/><path d="M723.30 419.80h8.70l-4.35 4.35z" fill="#e818e0"/><path d="M723.30 419.80v8.70l4.35 -4.35z" fill="#18e0f0"/><path d="M732.00 419.80v8.70l-4.35 -4.35z" fill="#f8f018"/><path d="M723.30 428.50h8.70l-4.35 -4.35z" fill="#000"/><rect x="708" y="439.0" width="10.300" height="10.300" fill="#c2c2c2"/><rect x="709.300" y="440.3" width="7.700" height="7.700" fill="url(#dots)"/><rect x="722.5" y="439.0" width="10.300" height="10.300" fill="#f0f0f0"/><path d="M723.30 439.80h8.70l-4.35 4.35z" fill="#e818e0"/><path d="M723.30 439.80v8.70l4.35 -4.35z" fill="#18e0f0"/><path d="M732.00 439.80v8.70l-4.35 -4.35z" fill="#f8f018"/><path d="M723.30 448.50h8.70l-4.35 -4.35z" fill="#000"/></svg>
<div style="left:492px;top:193px;width:68px;height:30px;border:3px solid #f63838"></div>
<div style="left:749px;top:199px;width:64.500px;height:27.500px;border:3px solid #f63838"></div>
<svg style="left:0;top:0" width="824" height="504" viewBox="0 0 824 504">
<defs><filter id="sh" x="-20%" y="-20%" width="140%" height="140%"><feGaussianBlur stdDeviation="1.200"/></filter></defs>
<g fill="#000" opacity="0.550" filter="url(#sh)" transform="translate(3 3)">
<path d="M550.8 99.4L523.1 172.0L520.9 166.4L519.5 189.3L533.1 170.8L527.8 173.7L552.8 100.2z"/>
<path d="M647.6 111.0L766.8 199.2L760.7 199.6L783.0 207.6L768.5 188.9L770.0 194.9L649.0 109.0z"/>
</g>
<g fill="#f2151b">
<path d="M550.8 99.4L523.1 172.0L520.9 166.4L519.5 189.3L533.1 170.8L527.8 173.7L552.8 100.2z"/>
<path d="M647.6 111.0L766.8 199.2L760.7 199.6L783.0 207.6L768.5 188.9L770.0 194.9L649.0 109.0z"/>
</g></svg>
</div></body></html>
